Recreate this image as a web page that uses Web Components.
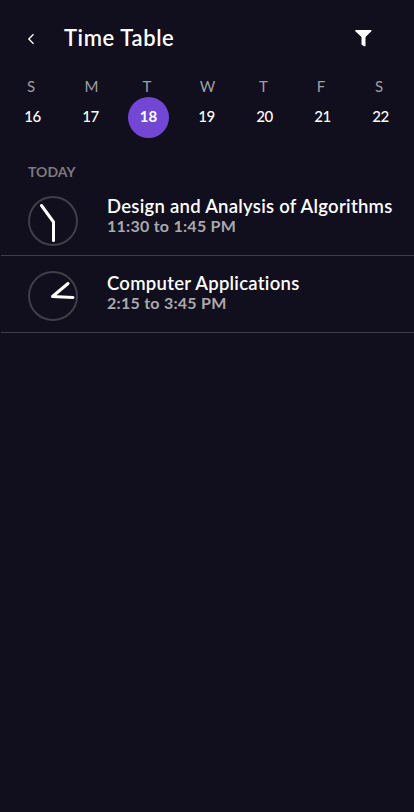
<!DOCTYPE html>
<html lang="en"><head><meta charset="utf-8"><title>Time Table</title>
<style>
html,body{margin:0;height:100%;background:#110e1d}
body{font-family:Lato,"Open Sans",sans-serif;color:#fff;font-variant-ligatures:none}
</style></head><body>
<time-table-app></time-table-app>
<script>
const define=(name,css,html)=>customElements.define(name,class extends HTMLElement{
  constructor(){super();this.attachShadow({mode:'open'}).innerHTML=`<style>*{box-sizing:border-box}${css}</style>${typeof html==='function'?html(this):html}`;}
});
define('app-header',`
:host{display:flex;align-items:center;height:76px;padding:0 42px 0 27px}
h1{margin:0 auto 0 28px;font-size:22px;line-height:30px;font-weight:600;letter-spacing:.6px;white-space:nowrap}
svg{display:block;flex:none}
.back{margin-top:2px}`,`
<svg class="back" width="9" height="12" viewBox="0 0 9 12"><path d="M6.5 1.2 1.8 6l4.7 4.8" fill="none" stroke="#fff" stroke-width="1.3"/></svg>
<h1><slot></slot></h1>
<svg width="17" height="18" viewBox="0 0 17 18"><path d="M.5 1h15.8q.5.6 0 1.3L10.5 8v9.2H9L6.5 15.5V8L.3 2.3Q0 1.6.5 1z" fill="#fff"/></svg>`);
define('day-cell',`
:host{display:grid;grid-template-rows:20px 41px;justify-items:center;width:58px;flex:none}
.d{font-size:15px;line-height:18px;color:#a09fa5;transform:translateX(var(--dx,0))}
.n{width:41px;height:41px;border-radius:50%;display:grid;place-items:center;font-size:15px;line-height:20px;font-weight:500;letter-spacing:-.4px;padding-bottom:3px}
:host([selected]) .n{background:#7347d6;font-weight:700;letter-spacing:0}
.n span{transform:translateX(.5px)}`,`
<div class="d"><slot name="day"></slot></div><div class="n"><span><slot></slot></span></div>`);
define('week-strip',`:host{display:flex;padding:1px 0 0 3px;height:62px}`,`<slot></slot>`);
define('clock-face',`:host{display:block;width:50px;height:50px}svg{display:block}`,el=>`
<svg width="50" height="50" viewBox="0 0 50 50"><circle cx="25" cy="25" r="24" fill="none" stroke="#403e49" stroke-width="2"/><path d="${el.getAttribute('hands')}" fill="none" stroke="#fff" stroke-width="3" stroke-linecap="round" stroke-linejoin="round"/></svg>`);
define('class-row',`
:host{display:flex;height:77px;margin-left:1px;padding:15px 0 0 27px;border-bottom:1px solid #403e49}
::slotted(clock-face){margin-top:var(--clock-top,0)}
.t{margin:1px 0 0 29px;white-space:nowrap}
h2{margin:0;font-size:18.5px;line-height:22px;font-weight:600;letter-spacing:.27px}
p{margin:0;font-size:16px;line-height:18px;font-weight:700;color:#aaa9ae;letter-spacing:.26px}`,`
<slot name="clock"></slot><div class="t"><h2><slot></slot></h2><p><slot name="time"></slot></p></div>`);
define('section-label',`:host{display:block;padding:25px 0 0 28px;height:41px;font-size:14px;line-height:18px;font-weight:700;letter-spacing:.05px;color:#7c7b82}`,`<slot></slot>`);
define('time-table-app',`:host{display:block;width:414px;height:812px;overflow:hidden;background:#110e1d}`,`
<app-header><span>Time Table</span></app-header>
<week-strip>
<day-cell style="--dx:-1px"><span slot="day">S</span><span>16</span></day-cell>
<day-cell style="--dx:1.5px"><span slot="day">M</span><span>17</span></day-cell>
<day-cell selected style="--dx:-1px"><span slot="day">T</span><span>18</span></day-cell>
<day-cell style="--dx:1.5px"><span slot="day">W</span><span>19</span></day-cell>
<day-cell style="--dx:-.5px"><span slot="day">T</span><span>20</span></day-cell>
<day-cell style="--dx:-1px"><span slot="day">F</span><span>21</span></day-cell>
<day-cell style="--dx:-1px"><span slot="day">S</span><span>22</span></day-cell>
</week-strip>
<section-label><span>TODAY</span></section-label>
<class-row style="--clock-top:2px"><clock-face slot="clock" hands="M13.5 9.5 25.5 26V44.5"></clock-face><span>Design and Analysis of Algorithms</span><span slot="time">11:30 to 1:45 PM</span></class-row>
<class-row><clock-face slot="clock" hands="M40 12.5 24.5 25.5 45 26.5"></clock-face><span>Computer Applications</span><span slot="time">2:15 to 3:45 PM</span></class-row>`);
</script></body></html>
